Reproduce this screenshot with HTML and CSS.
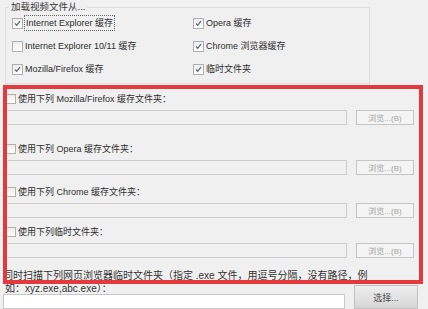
FILE: index.html
```html
<!DOCTYPE html>
<html lang="zh-CN">
<head>
<meta charset="utf-8">
<title>视频文件来源</title>
<link rel="stylesheet" href="styles.css">
</head>
<body>
<div class="dialog">
  <fieldset class="group">
    <legend>加载视频文件从...</legend>
    <div class="grid">
      <label class="chk"><span class="box on"><svg viewBox="0 0 11 11"><path d="M2.5 5.5l2 2.2 4-5"/></svg></span><span class="focus">Internet Explorer 缓存</span></label>
      <label class="chk"><span class="box on"><svg viewBox="0 0 11 11"><path d="M2.5 5.5l2 2.2 4-5"/></svg></span>Opera 缓存</label>
      <label class="chk"><span class="box"></span>Internet Explorer 10/11 缓存</label>
      <label class="chk"><span class="box on"><svg viewBox="0 0 11 11"><path d="M2.5 5.5l2 2.2 4-5"/></svg></span>Chrome 浏览器缓存</label>
      <label class="chk"><span class="box on"><svg viewBox="0 0 11 11"><path d="M2.5 5.5l2 2.2 4-5"/></svg></span>Mozilla/Firefox 缓存</label>
      <label class="chk"><span class="box on"><svg viewBox="0 0 11 11"><path d="M2.5 5.5l2 2.2 4-5"/></svg></span>临时文件夹</label>
    </div>
  </fieldset>

  <div class="sec s1">
    <label class="chk"><span class="box"></span>使用下列 Mozilla/Firefox 缓存文件夹：</label>
    <div class="pathrow"><span class="field"></span><span class="btn dis">浏览...(B)</span></div>
  </div>
  <div class="sec s2">
    <label class="chk"><span class="box"></span>使用下列 Opera 缓存文件夹：</label>
    <div class="pathrow"><span class="field"></span><span class="btn dis">浏览...(B)</span></div>
  </div>
  <div class="sec s3">
    <label class="chk"><span class="box"></span>使用下列 Chrome 缓存文件夹：</label>
    <div class="pathrow"><span class="field"></span><span class="btn dis">浏览...(B)</span></div>
  </div>
  <div class="sec s4">
    <label class="chk"><span class="box"></span>使用下列临时文件夹：</label>
    <div class="pathrow"><span class="field"></span><span class="btn dis">浏览...(B)</span></div>
  </div>

  <p class="note">同时扫描下列网页浏览器临时文件夹（指定 .exe 文件，用逗号分隔，没有路径，例</p>
  <div class="bottom">
    <div class="left">
      <p class="note2">如：xyz.exe,abc.exe）：</p>
      <span class="field white"></span>
    </div>
    <span class="btn sel">选择...</span>
  </div>

  <div class="mark"></div>
</div>
</body>
</html>
```

FILE: styles.css
```css
html, body {
  margin: 0;
  padding: 0;
  background: #f0f0f0;
  overflow: hidden;
}

.dialog {
  position: relative;
  width: 428px;
  height: 309px;
  padding: 0 0 0 3px;
  box-sizing: border-box;
  font-family: "Liberation Sans", "Noto Sans CJK SC", sans-serif;
  font-size: 9px;
  color: #2e2e2e;
}

.group {
  margin: 2px 0 0 2px;
  padding: 0;
  width: 365px;
  height: 82px;
  box-sizing: border-box;
  border: 1px solid #dedede;
}

.group legend {
  margin-left: 3px;
  padding: 0 2px;
  line-height: 10px;
  font-size: 9.5px;
  color: #3a3a3a;
}

.grid {
  display: grid;
  grid-template-columns: 181px 1fr;
  row-gap: 9px;
  padding: 4px 0 0 6px;
}

.chk {
  display: flex;
  align-items: center;
  height: 14px;
  line-height: 14px;
  white-space: nowrap;
}

.box {
  width: 11px;
  height: 11px;
  box-sizing: border-box;
  border: 1px solid #b0b0b0;
  background: linear-gradient(#ededed, #ffffff);
  margin-right: 2px;
  flex: none;
  display: flex;
}

.box svg {
  width: 9px;
  height: 9px;
  fill: none;
  stroke: #56627a;
  stroke-width: 1.5;
}

.focus {
  outline: 1px dotted #666;
  outline-offset: 0;
  padding: 0 1px;
}

.sec .chk .box {
  margin-right: 2px;
  width: 10px;
  height: 10px;
}

.sec .chk {
  padding-left: 3px;
}

.s1 { margin-top: 8px; }
.s2 { margin-top: 17px; }
.s3 { margin-top: 10px; }
.s4 { margin-top: 7px; }

.pathrow {
  display: flex;
  align-items: center;
  gap: 9px;
  margin-top: 4px;
}

.field {
  display: block;
  width: 344px;
  height: 15px;
  box-sizing: border-box;
  border: 1px solid #cdcdcd;
  background: #f0f0f0;
}

.field.white {
  width: 342px;
  background: #ffffff;
  border-color: #c8c8c8;
}

.btn {
  display: flex;
  align-items: center;
  justify-content: center;
  box-sizing: border-box;
  white-space: nowrap;
}

.btn.dis {
  width: 58px;
  height: 15px;
  border: 1px solid #c6c6c6;
  background: #f4f4f4;
  color: #a6a6a6;
  font-size: 8px;
}

.note {
  margin: 12px 0 0 0;
  height: 11px;
  line-height: 11px;
  font-size: 10px;
  white-space: nowrap;
  color: #333;
}

.bottom {
  display: flex;
  align-items: flex-end;
  gap: 9px;
}

.note2 {
  margin: 2px 0 0 2px;
  height: 11px;
  line-height: 11px;
  font-size: 10px;
  color: #333;
}

.btn.sel {
  width: 64px;
  height: 24px;
  border: 1px solid #c2c2c2;
  background: linear-gradient(#efefef, #d6d6d6);
  color: #4a4a4a;
  font-size: 9px;
}

.mark {
  position: absolute;
  left: 3px;
  top: 83px;
  width: 420px;
  height: 199px;
  box-sizing: border-box;
  border: 4px solid #e53a3d;
  pointer-events: none;
}
```
